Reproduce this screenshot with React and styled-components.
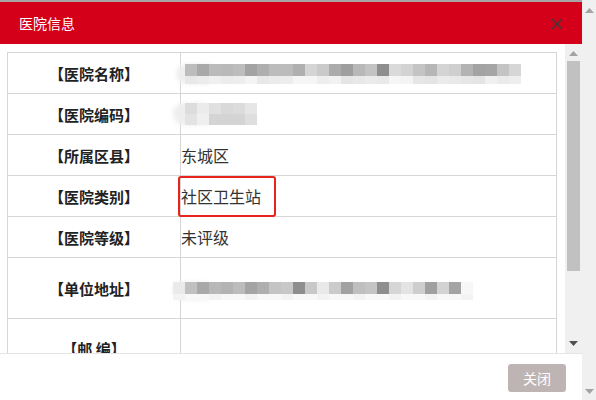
import React from "react";
import styled, { createGlobalStyle } from "styled-components";

const Global = createGlobalStyle`
  html, body {
    margin: 0;
    padding: 0;
    background: #fff;
    overflow: hidden;
  }
  body {
    font-family: "Noto Sans CJK SC", "Noto Sans", sans-serif;
  }
`;

const Page = styled.div`
  display: flex;
  width: 596px;
  height: 400px;
`;

const Main = styled.div`
  display: flex;
  flex-direction: column;
  width: 582px;
  height: 400px;
`;

const TopStrip = styled.div`
  height: 2px;
  background: #a6a6a6;
`;

const Header = styled.div`
  height: 42px;
  background: #d40019;
  display: flex;
  align-items: center;
  justify-content: space-between;
  padding: 0 19px 0 19px;
`;

const Title = styled.div`
  color: #fff;
  font-size: 14px;
  line-height: 16px;
`;

const CloseBtn = styled.div`
  width: 12px;
  height: 12px;
  display: flex;
  margin-top: 1px;
`;

const Body = styled.div`
  display: flex;
  height: 309px;
`;

const Content = styled.div`
  flex: 1;
  overflow: hidden;
  padding: 8px 8px 0 7px;
`;

const Table = styled.div`
  border: 1px solid #d6d6d6;
  border-bottom: none;
`;

const Row = styled.div`
  display: grid;
  grid-template-columns: 173px 1fr;
  height: ${p => p.$h}px;
  border-bottom: 1px solid #d6d6d6;
  box-sizing: border-box;
`;

const Label = styled.div`
  border-right: 1px solid #d6d6d6;
  display: flex;
  align-items: center;
  justify-content: center;
  font-size: 15px;
  font-weight: bold;
  color: #222;
  white-space: pre;
`;

const Value = styled.div`
  position: relative;
  display: flex;
  align-items: center;
  font-size: 16px;
  color: #333;
`;

const Highlight = styled.div`
  position: absolute;
  left: -3px;
  top: 0;
  width: 98px;
  height: 41px;
  box-sizing: border-box;
  border: 2px solid #e8221c;
  border-radius: 3px;
`;

const Mosaic = styled.div`
  position: relative;
  margin-left: ${p => p.$offset}px;
  margin-top: ${p => p.$top || 0}px;
  display: flex;
  flex-direction: column;
  &::before {
    content: "";
    position: absolute;
    left: ${p => p.$blobLeft}px;
    top: 0;
    bottom: 0;
    width: 40px;
    border-radius: 12px;
    background: #eeeeee;
    filter: blur(2px);
  }
`;

const CellRow = styled.div`
  position: relative;
  display: flex;
`;

const Cell = styled.div`
  width: 12px;
  height: ${p => p.$h}px;
  background: ${p => p.$c};
`;

const ScrollTrack = styled.div`
  width: ${p => p.$w}px;
  background: #f0f0f0;
  display: flex;
  flex-direction: column;
  align-items: center;
  justify-content: space-between;
  padding: ${p => p.$pad};
  box-sizing: border-box;
`;

const ArrowWrap = styled.div`
  display: flex;
  justify-content: center;
  height: 6px;
`;

const Thumb = styled.div`
  width: 13px;
  height: 210px;
  background: #c1c1c1;
  margin-top: 4px;
  margin-bottom: auto;
`;

const Footer = styled.div`
  flex: 1;
  border-top: 1px solid #e5e5e5;
  display: flex;
  justify-content: flex-end;
  align-items: flex-start;
  padding: 10px 16px 0 0;
`;

const Button = styled.div`
  width: 58px;
  height: 28px;
  border-radius: 3px;
  background: #bfb4b4;
  color: #fff;
  font-size: 14px;
  display: flex;
  align-items: center;
  justify-content: center;
`;

const Arrow = ({ up, color }) => (
  <ArrowWrap>
    <svg width="9" height="6" viewBox="0 0 9 6">
      {up ? (
        <polygon points="0,5 9,5 4.5,0" fill={color} />
      ) : (
        <polygon points="0,0 9,0 4.5,5" fill={color} />
      )}
    </svg>
  </ArrowWrap>
);

const row1Top = ["#bdbdbd", "#a9a9a9", "#bbbbbb", "#b9b9b9", "#bdbdbd", "#a3a3a3", "#afafaf", "#bcbcbc", "#bcbcbc", "#b0b0b0", "#d5d5d5", "#cacaca", "#ababab", "#9e9e9e", "#b8b8b8", "#c3c3c3", "#8e8e8e", "#dadada", "#d3d3d3", "#c4c4c4", "#b6b6b6", "#d4d4d4", "#cfcfcf", "#b3b3b3", "#a3a3a3", "#a5a5a5", "#c4c4c4", "#d6d6d6"];
const row1Bot = ["#e8e8e8", "#ececec", "#f0f0f0", "#ececec", "#eeeeee", "#f4f4f4", "#e8e8e8", "#ebebeb", "#ededed", "#f6f6f6", "#f6f6f6", "#eeeeee", "#f2f2f2", "#e5e5e5", "#e8e8e8", "#ebebeb", "#e9e9e9", "#f6f6f6", "#f4f4f4", "#e6e6e6", "#e4e4e4", "#ebebeb", "#e9e9e9", "#e6e6e6", "#e4e4e4", "#f0f0f0", "#ebebeb", "#eeeeee"];
const row2Top = ["#dcdcdc", "#ebebeb", "#e0e0e0", "#d9d9d9", "#dcdcdc", "#e6e6e6"];
const row2Bot = ["#e3e3e3", "#efefef", "#d4d4d4", "#d4d4d4", "#d4d4d4", "#dedede"];
const row6Top = ["#eaeaea", "#c0c0c0", "#a9a9a9", "#b8b8b8", "#b3b3b3", "#bcbcbc", "#a4a4a4", "#afafaf", "#c4c4c4", "#c8c8c8", "#8e8e8e", "#c8c8c8", "#e9e9e9", "#cbcbcb", "#a2a2a2", "#bfbfbf", "#c4c4c4", "#8e8e8e", "#d6d6d6", "#e3e3e3", "#cecece", "#a0a0a0", "#d3d3d3", "#a4a4a4", "#f7f7f7"];
const row6Bot = row6Top.map((c, i) => (i % 3 === 0 ? "#f3f3f3" : "#f8f8f8"));

const Pixels = ({ top, bot, th, bh, offset, blobLeft, mt }) => (
  <Mosaic $offset={offset} $blobLeft={blobLeft} $top={mt}>
    <CellRow>
      {top.map((c, i) => (
        <Cell key={i} $c={c} $h={th} />
      ))}
    </CellRow>
    <CellRow>
      {bot.map((c, i) => (
        <Cell key={i} $c={c} $h={bh} />
      ))}
    </CellRow>
  </Mosaic>
);

const App = () => {
  return (
    <Page>
      <Global />
      <Main>
        <TopStrip />
        <Header>
          <Title>医院信息</Title>
          <CloseBtn>
            <svg width="12" height="12" viewBox="0 0 12 12">
              <path d="M1 1 L11 11 M11 1 L1 11" stroke="#3d3a3a" strokeWidth="1.5" />
            </svg>
          </CloseBtn>
        </Header>
        <Body>
          <Content>
            <Table>
              <Row $h={41}>
                <Label>【医院名称】</Label>
                <Value>
                  <Pixels top={row1Top} bot={row1Bot} th={12} bh={8} offset={4} blobLeft={-9} mt={2} />
                </Value>
              </Row>
              <Row $h={41}>
                <Label>【医院编码】</Label>
                <Value>
                  <Pixels top={row2Top} bot={row2Bot} th={11} bh={11} offset={4} blobLeft={-12} />
                </Value>
              </Row>
              <Row $h={41}>
                <Label>【所属区县】</Label>
                <Value>东城区</Value>
              </Row>
              <Row $h={41}>
                <Label>【医院类别】</Label>
                <Value>
                  社区卫生站
                  <Highlight />
                </Value>
              </Row>
              <Row $h={41}>
                <Label>【医院等级】</Label>
                <Value>未评级</Value>
              </Row>
              <Row $h={61}>
                <Label>【单位地址】</Label>
                <Value>
                  <Pixels top={row6Top} bot={row6Bot} th={12} bh={6} offset={-8} blobLeft={0} mt={6} />
                </Value>
              </Row>
              <Row $h={60}>
                <Label>【邮 编】</Label>
                <Value />
              </Row>
            </Table>
          </Content>
          <ScrollTrack $w={17} $pad="7px 0 6px 0">
            <Arrow up color="#a3a3a3" />
            <Thumb />
            <Arrow color="#505050" />
          </ScrollTrack>
        </Body>
        <Footer>
          <Button>关闭</Button>
        </Footer>
      </Main>
      <ScrollTrack $w={14} $pad="8px 0 5px 0">
        <Arrow up color="#a3a3a3" />
        <Arrow color="#a3a3a3" />
      </ScrollTrack>
    </Page>
  );
};

export default App;
